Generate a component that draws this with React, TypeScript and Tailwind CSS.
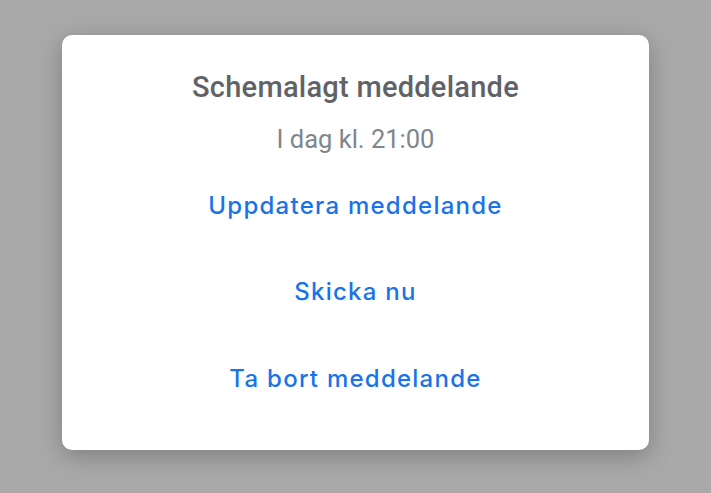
import React from "react";

export default function App() {
  return (
    <div
      className="w-[711px] h-[493px] bg-[#a9a9a9] flex items-start justify-center pt-[35px]"
      style={{ fontFamily: "Roboto, 'Liberation Sans', sans-serif" }}
    >
      <div className="w-[587px] h-[415px] bg-white rounded-[10px] shadow-[0_6px_24px_rgba(0,0,0,0.25)] flex flex-col items-center">
        <div className="mt-[35px] text-[29px] leading-[34px] font-medium text-[#5f6368] tracking-[0.25px]">
          Schemalagt meddelande
        </div>
        <div className="mt-[20px] text-[25.5px] leading-[30px] text-[#80868b]">I dag kl. 21:00</div>
        <div
          className="mt-[8.5px] flex flex-col items-center w-full"
          style={{ fontFamily: "Inter, Roboto, sans-serif" }}
        >
          <button className="h-[86.5px] w-full flex items-center justify-center text-[24px] font-medium tracking-[1.25px] text-[#1a73e8]">
            Uppdatera meddelande
          </button>
          <button className="h-[86.5px] w-full flex items-center justify-center text-[24px] font-medium tracking-[1.25px] text-[#1a73e8]">
            Skicka nu
          </button>
          <button className="h-[86.5px] w-full flex items-center justify-center text-[24px] font-medium tracking-[1.25px] text-[#1a73e8]">
            Ta bort meddelande
          </button>
        </div>
      </div>
    </div>
  );
}
